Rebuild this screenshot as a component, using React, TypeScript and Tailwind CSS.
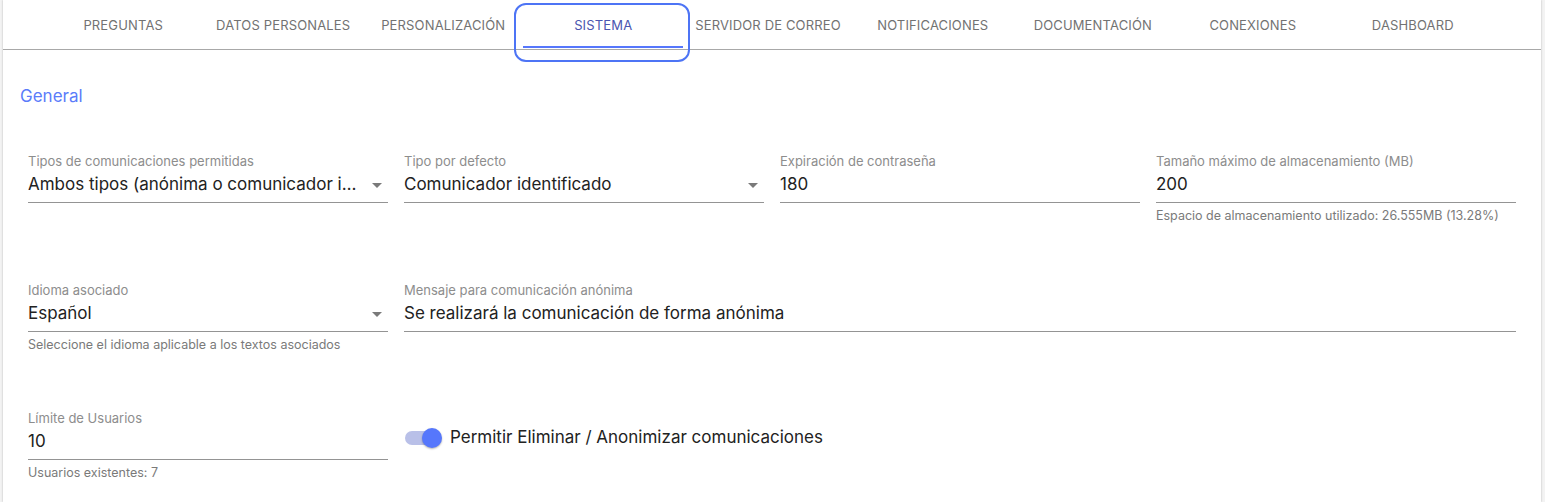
import { useState } from 'react';

const tabs = [
  'PREGUNTAS',
  'DATOS PERSONALES',
  'PERSONALIZACIÓN',
  'SISTEMA',
  'SERVIDOR DE CORREO',
  'NOTIFICACIONES',
  'DOCUMENTACIÓN',
  'CONEXIONES',
  'DASHBOARD',
];

function Arrow() {
  return (
    <svg width="10" height="5" viewBox="0 0 10 5" className="shrink-0 ml-[10px] text-[#7a7a7a]">
      <path d="M0 0 L10 0 L5 5 Z" fill="currentColor" />
    </svg>
  );
}

interface FieldProps {
  label: string;
  value: string;
  select?: boolean;
  hint?: string;
  className?: string;
}

function Field({ label, value, select, hint, className }: FieldProps) {
  return (
    <div className={className}>
      <div className="text-[13px] leading-[16px] text-[#8d8d8d]">{label}</div>
      <div className="flex items-center h-[34px] border-b border-[#949494] pr-[6px]">
        <span className="flex-1 min-w-0 truncate text-[17px] text-[#222]">{value}</span>
        {select && <Arrow />}
      </div>
      {hint && <div className="mt-[6px] text-[12.5px] leading-[14px] text-[#7a7a7a]">{hint}</div>}
    </div>
  );
}

export default function App() {
  const [active, setActive] = useState(3);
  const [allowDelete, setAllowDelete] = useState(true);

  return (
    <div className="w-[1545px] h-[502px] overflow-hidden bg-[#f3f3f3] pl-[3px] pr-[4px] font-['Inter',sans-serif]">
      <div className="relative h-full bg-white shadow-[0_0_2px_rgba(0,0,0,0.25)]">
        <nav className="flex justify-center h-[50px] pr-[8px] border-b border-[#a8a8a8]">
          {tabs.map((t, i) => (
            <button
              key={t}
              onClick={() => setActive(i)}
              className={
                'relative min-w-[160px] px-3 pt-[3px] text-[13px] tracking-[0.15px] ' +
                (i === active ? 'text-[#4b55b0]' : 'text-[#727272]')
              }
            >
              {t}
              {i === active && <span className="absolute left-0 right-0 bottom-[1px] h-[2px] bg-[#5677fc]" />}
            </button>
          ))}
        </nav>
        <div className="absolute left-[511px] top-[3px] w-[176px] h-[59px] rounded-[12px] border-2 border-[#4d74f5]" />

        <div className="px-[17px]">
          <h2 className="mt-[34px] text-[17px] text-[#5b7cfa]">General</h2>

          <div className="mt-[43px] grid grid-cols-[360px_360px_360px_360px] gap-x-[16px] pl-[8px]">
            <Field label="Tipos de comunicaciones permitidas" value="Ambos tipos (anónima o comunicador identificado)" select />
            <Field label="Tipo por defecto" value="Comunicador identificado" select />
            <Field label="Expiración de contraseña" value="180" />
            <Field
              label="Tamaño máximo de almacenamiento (MB)"
              value="200"
              hint="Espacio de almacenamiento utilizado: 26.555MB (13.28%)"
            />
          </div>

          <div className="mt-[59px] grid grid-cols-[360px_360px_360px_360px] gap-x-[16px] pl-[8px]">
            <Field
              label="Idioma asociado"
              value="Español"
              select
              hint="Seleccione el idioma aplicable a los textos asociados"
            />
            <Field
              className="col-span-3"
              label="Mensaje para comunicación anónima"
              value="Se realizará la comunicación de forma anónima"
            />
          </div>

          <div className="mt-[58px] grid grid-cols-[360px_360px_360px_360px] gap-x-[16px] pl-[8px]">
            <Field label="Límite de Usuarios" value="10" hint="Usuarios existentes: 7" />
            <label className="col-span-3 self-start mt-[18px] h-[20px] flex items-center gap-[9px] cursor-pointer">
              <span
                onClick={() => setAllowDelete(!allowDelete)}
                className={
                  'relative w-[36px] h-[14px] ml-[1px] rounded-full ' +
                  (allowDelete ? 'bg-[#b9c0e8]' : 'bg-[#bdbdbd]')
                }
              >
                <span
                  className={
                    'absolute top-[-3px] w-[20px] h-[20px] rounded-full shadow-[0_1px_2px_rgba(0,0,0,0.3)] ' +
                    (allowDelete ? 'left-[17px] bg-[#5677fc]' : 'left-[-2px] bg-[#fafafa]')
                  }
                />
              </span>
              <span className="text-[17px] text-[#222]">Permitir Eliminar / Anonimizar comunicaciones</span>
            </label>
          </div>
        </div>
      </div>
    </div>
  );
}
